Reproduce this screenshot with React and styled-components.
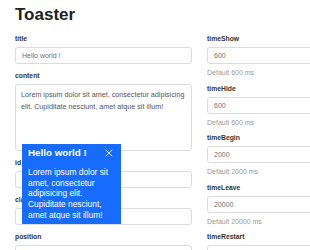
import styled, { createGlobalStyle } from 'styled-components';

const GlobalStyle = createGlobalStyle`
  html, body {
    margin: 0;
    padding: 0;
    background: #ffffff;
    overflow: hidden;
  }
  body {
    font-family: 'Liberation Sans', Arial, sans-serif;
    color: #333333;
  }
`;

const leftFields = [
  { name: 'title', value: 'Hello world !' },
  { name: 'content', value: 'Lorem ipsum dolor sit amet, consectetur adipisicing elit. Cupiditate nesciunt, amet atque sit illum!', area: true },
  { name: 'id', value: '' },
  { name: 'class', value: '' },
  { name: 'position', value: 'bottom-left', select: true },
];

const rightFields = [
  { name: 'timeShow', value: '600' },
  { name: 'timeHide', value: '600' },
  { name: 'timeBegin', value: '2000' },
  { name: 'timeLeave', value: '20000' },
  { name: 'timeRestart', value: '5000' },
];

export default function App() {
  return (
    <>
      <GlobalStyle />
      <Page>
        <Heading>Toaster</Heading>
        <Columns>
          <Column>
            {leftFields.map((f) => (
              <Field key={f.name}>
                <Label>{f.name}</Label>
                {f.area ? (
                  <TextArea>{f.value}</TextArea>
                ) : (
                  <Input>
                    {f.value}
                    {f.select && <Caret />}
                  </Input>
                )}
              </Field>
            ))}
          </Column>
          <Column>
            {rightFields.map((f) => (
              <Field key={f.name} wide>
                <Label>{f.name}</Label>
                <Input>{f.value}</Input>
                <Help>Default {f.value} ms</Help>
              </Field>
            ))}
          </Column>
        </Columns>
        <Toast>
          <ToastHead>
            <ToastTitle>Hello world !</ToastTitle>
            <Close viewBox="0 0 10 10">
              <path d="M1 1 L9 9 M9 1 L1 9" stroke="#ffffff" strokeWidth="1.1" />
            </Close>
          </ToastHead>
          <ToastBody>
            Lorem ipsum dolor sit amet, consectetur adipisicing elit. Cupiditate nesciunt, amet atque sit illum!
          </ToastBody>
        </Toast>
      </Page>
    </>
  );
}

const Page = styled.div`
  position: relative;
  width: 400px;
  padding: 5px 15px;
`;

const Heading = styled.h1`
  margin: 0 0 9px;
  font-size: 17px;
  line-height: 20px;
  font-weight: bold;
  color: #222222;
`;

const Columns = styled.div`
  display: grid;
  grid-template-columns: 177px 177px;
  column-gap: 15px;
`;

const Column = styled.div`
  display: flex;
  flex-direction: column;
`;

const Field = styled.div`
  display: flex;
  flex-direction: column;
  margin-bottom: ${(p) => (p.wide ? '6.5px' : '7px')};
`;

const Label = styled.div`
  font-size: 6.8px;
  line-height: 9px;
  font-weight: bold;
  color: #333333;
  margin-bottom: 4px;
`;

const Input = styled.div`
  position: relative;
  box-sizing: border-box;
  height: 17px;
  border: 1px solid #dcdcdc;
  border-radius: 3px;
  padding: 0 6px;
  font-size: 7px;
  line-height: 15px;
  color: #707070;
`;

const TextArea = styled.div`
  box-sizing: border-box;
  height: 67px;
  border: 1px solid #dcdcdc;
  border-radius: 3px;
  padding: 4px 3px 4px 5px;
  font-size: 7.2px;
  line-height: 11.5px;
  color: #555555;
`;

const Caret = styled.span`
  position: absolute;
  right: 5px;
  top: 7px;
  border-left: 2px solid transparent;
  border-right: 2px solid transparent;
  border-top: 2px solid #555555;
`;

const Help = styled.div`
  margin-top: 4px;
  font-size: 7px;
  line-height: 9px;
  color: #999999;
`;

const Toast = styled.div`
  position: absolute;
  left: 22px;
  top: 144px;
  width: 99px;
  height: 80px;
  box-sizing: border-box;
  padding: 3px 6px 0 6px;
  background: #176cff;
  color: #ffffff;
`;

const ToastHead = styled.div`
  display: flex;
  justify-content: space-between;
  align-items: center;
  height: 12px;
`;

const ToastTitle = styled.div`
  font-size: 9.8px;
  font-weight: bold;
  line-height: 12px;
`;

const Close = styled.svg`
  width: 8px;
  height: 8px;
  margin-right: 2px;
`;

const ToastBody = styled.div`
  margin-top: 8px;
  font-size: 8.4px;
  line-height: 10.7px;
`;
